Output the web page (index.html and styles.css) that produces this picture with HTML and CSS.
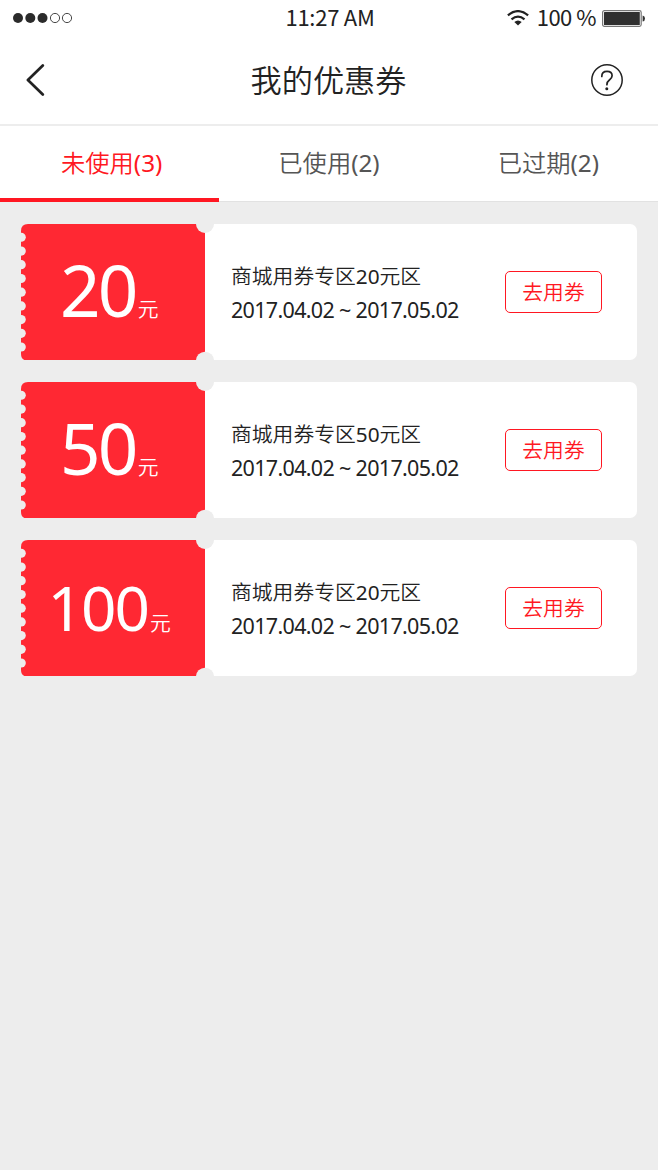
FILE: index.html
```html
<!DOCTYPE html>
<html lang="zh-CN">
<head>
<meta charset="utf-8">
<title>我的优惠券</title>
<link rel="stylesheet" href="styles.css">
</head>
<body>
<svg class="defs" width="0" height="0" aria-hidden="true">
  <defs>
    <symbol id="stub" viewBox="0 0 194 137" preserveAspectRatio="none">
      <path fill="#ff2833" d="M7 0H184V137H7Q0 137 0 130V7Q0 0 7 0Z"/>
      <g fill="#ededed">
        <circle cx=".2" cy="13.3" r="4.6"/><circle cx=".2" cy="27.1" r="4.6"/><circle cx=".2" cy="40.8" r="4.6"/>
        <circle cx=".2" cy="54.6" r="4.6"/><circle cx=".2" cy="68.3" r="4.6"/><circle cx=".2" cy="82.1" r="4.6"/>
        <circle cx=".2" cy="95.8" r="4.6"/><circle cx=".2" cy="109.6" r="4.6"/><circle cx=".2" cy="123.3" r="4.6"/>
        <circle cx="184" cy="0" r="9"/><circle cx="184" cy="137" r="9"/>
      </g>
    </symbol>
  </defs>
</svg>
<div class="status">
  <svg class="signal" width="62" height="12" viewBox="0 0 62 12">
    <g fill="#2b2b2b"><circle cx="6" cy="6" r="5"/><circle cx="18.3" cy="6" r="5"/><circle cx="30.5" cy="6" r="5"/></g>
    <g fill="none" stroke="#333" stroke-width=".9"><circle cx="43" cy="6" r="4.6"/><circle cx="55" cy="6" r="4.6"/></g>
  </svg>
  <span class="clock">11:27 AM</span>
  <div class="power">
    <svg class="wifi" width="22" height="16" viewBox="0 0 22 16">
      <g fill="none" stroke="#222" stroke-width="2.3"><path d="M.9 5.3Q11-3 21.1 5.3"/><path d="M4.5 9.3Q11 4 17.5 9.3"/></g>
      <path fill="#222" d="M7.3 12Q11 9 14.7 12L11 15.6Z"/>
    </svg>
    <span class="percent">100 %</span>
    <svg class="battery" width="43" height="17" viewBox="0 0 43 17">
      <rect x=".6" y=".6" width="38.6" height="15.8" rx="1.8" fill="#fff" stroke="#777" stroke-width="1.2"/>
      <rect x="2" y="2" width="35.8" height="13" rx=".5" fill="#303030"/>
      <path fill="#333" d="M40.6 5.5Q43 6 43 8.5T40.6 11.5Z"/>
    </svg>
  </div>
</div>
<header class="header">
  <svg class="back" width="20" height="34" viewBox="0 0 20 34"><path d="M16.8 2.5L1.9 17L16.8 31.5" fill="none" stroke="#222" stroke-width="2.7" stroke-linecap="round" stroke-linejoin="round"/></svg>
  <h1 class="title">我的优惠券</h1>
  <svg class="help" width="32" height="32" viewBox="0 0 32 32">
    <circle cx="16" cy="16" r="15.2" fill="none" stroke="#222" stroke-width="1.5"/>
    <path d="M10.8 12.4Q10.8 7.4 16 7.4T21.1 11.8Q21.1 14 18.4 16Q15.9 17.8 15.9 20.7" fill="none" stroke="#222" stroke-width="1.7" stroke-linecap="round"/>
    <circle cx="15.8" cy="24.7" r="1.5" fill="#222"/>
  </svg>
</header>
<nav class="tabs">
  <a class="tab active">未使用(3)</a>
  <a class="tab">已使用(2)</a>
  <a class="tab">已过期(2)</a>
</nav>
<main class="list">
  <article class="ticket">
    <svg class="shape" width="194" height="137"><use href="#stub"/></svg>
    <div class="amount"><span class="num">20</span><span class="unit">元</span></div>
    <div class="info"><p class="name">商城用券专区20元区</p><p class="date">2017.04.02 ~ 2017.05.02</p></div>
    <a class="use">去用券</a>
  </article>
  <article class="ticket">
    <svg class="shape" width="194" height="137"><use href="#stub"/></svg>
    <div class="amount"><span class="num">50</span><span class="unit">元</span></div>
    <div class="info"><p class="name">商城用券专区50元区</p><p class="date">2017.04.02 ~ 2017.05.02</p></div>
    <a class="use">去用券</a>
  </article>
  <article class="ticket">
    <svg class="shape" width="194" height="137"><use href="#stub"/></svg>
    <div class="amount hundred"><span class="num">100</span><span class="unit">元</span></div>
    <div class="info"><p class="name">商城用券专区20元区</p><p class="date">2017.04.02 ~ 2017.05.02</p></div>
    <a class="use">去用券</a>
  </article>
</main>
</body>
</html>
```
FILE: styles.css
```css
* { box-sizing: border-box; }
body {
  margin: 0;
  min-height: 1170px;
  background: #ededed;
  color: #222;
  font-family: "Noto Sans", "Noto Sans CJK SC DemiLight", "Noto Sans CJK SC", sans-serif;
}
.defs { position: absolute; }
.status {
  display: grid;
  grid-template-columns: 1fr auto 1fr;
  align-items: center;
  height: 36px;
  padding: 0 13px 0 12px;
  background: #fff;
  font-family: "Noto Sans CJK SC", sans-serif;
  font-size: 22px;
  line-height: 32px;
}
.clock, .percent { padding-bottom: 4px; letter-spacing: -.25px; }
.clock { padding-left: 3px; }
.power { display: flex; align-items: center; justify-content: flex-end; }
.percent { margin: 0 6px 0 8px; letter-spacing: -.5px; }
.header {
  display: grid;
  grid-template-columns: 1fr auto 1fr;
  align-items: center;
  height: 90px;
  padding: 0 35px 0 26px;
  background: #fff;
  border-bottom: 2px solid #ededed;
}
.title { margin: 0; padding: 0 0 1px 8px; font-size: 31.2px; font-weight: 400; line-height: 44px; }
.help { justify-self: end; }
.tabs { display: grid; grid-template-columns: repeat(3, 1fr); height: 76px; background: #fff; }
.tab {
  height: 76px;
  box-shadow: inset 0 -1px #e2e2e2;
  color: #555;
  font-size: 24.3px;
  line-height: 74px;
  text-align: center;
}
.tab.active { padding-left: 4px; color: #ff1722; box-shadow: inset 0 -4px #ff1722; }
.list { display: flex; flex-direction: column; gap: 21.3px; padding: 21.7px 21px; }
.ticket {
  position: relative;
  display: flex;
  align-items: center;
  height: 136.7px;
  padding-right: 35px;
  background: #fff;
  border-radius: 7px;
}
.shape { position: absolute; left: 0; top: 0; height: 100%; background: linear-gradient(to right, #ededed 8px, transparent 8px); }
.amount {
  position: relative;
  display: flex;
  align-items: baseline;
  width: 184px;
  padding: 14px 0 0 39px;
  color: #fff;
  line-height: 100px;
}
.num { font-size: 71px; letter-spacing: -2.8px; }
.unit { margin-left: 2px; font-size: 20.8px; }
.hundred { padding: 14px 0 0 26.5px; }
.hundred .num { font-size: 62px; letter-spacing: -2px; }
.info { flex: 1; padding: 2px 0 0 26px; }
.name, .date { margin: 0; font-size: 20.8px; line-height: 33px; white-space: nowrap; }
.date { padding-left: 0; font-size: 21.5px; letter-spacing: -.68px; }
.use {
  width: 97px;
  height: 42px;
  border: 1px solid #ff1722;
  border-radius: 5px;
  color: #ff1722;
  font-size: 20.8px;
  line-height: 41px;
  text-align: center;
}
```
